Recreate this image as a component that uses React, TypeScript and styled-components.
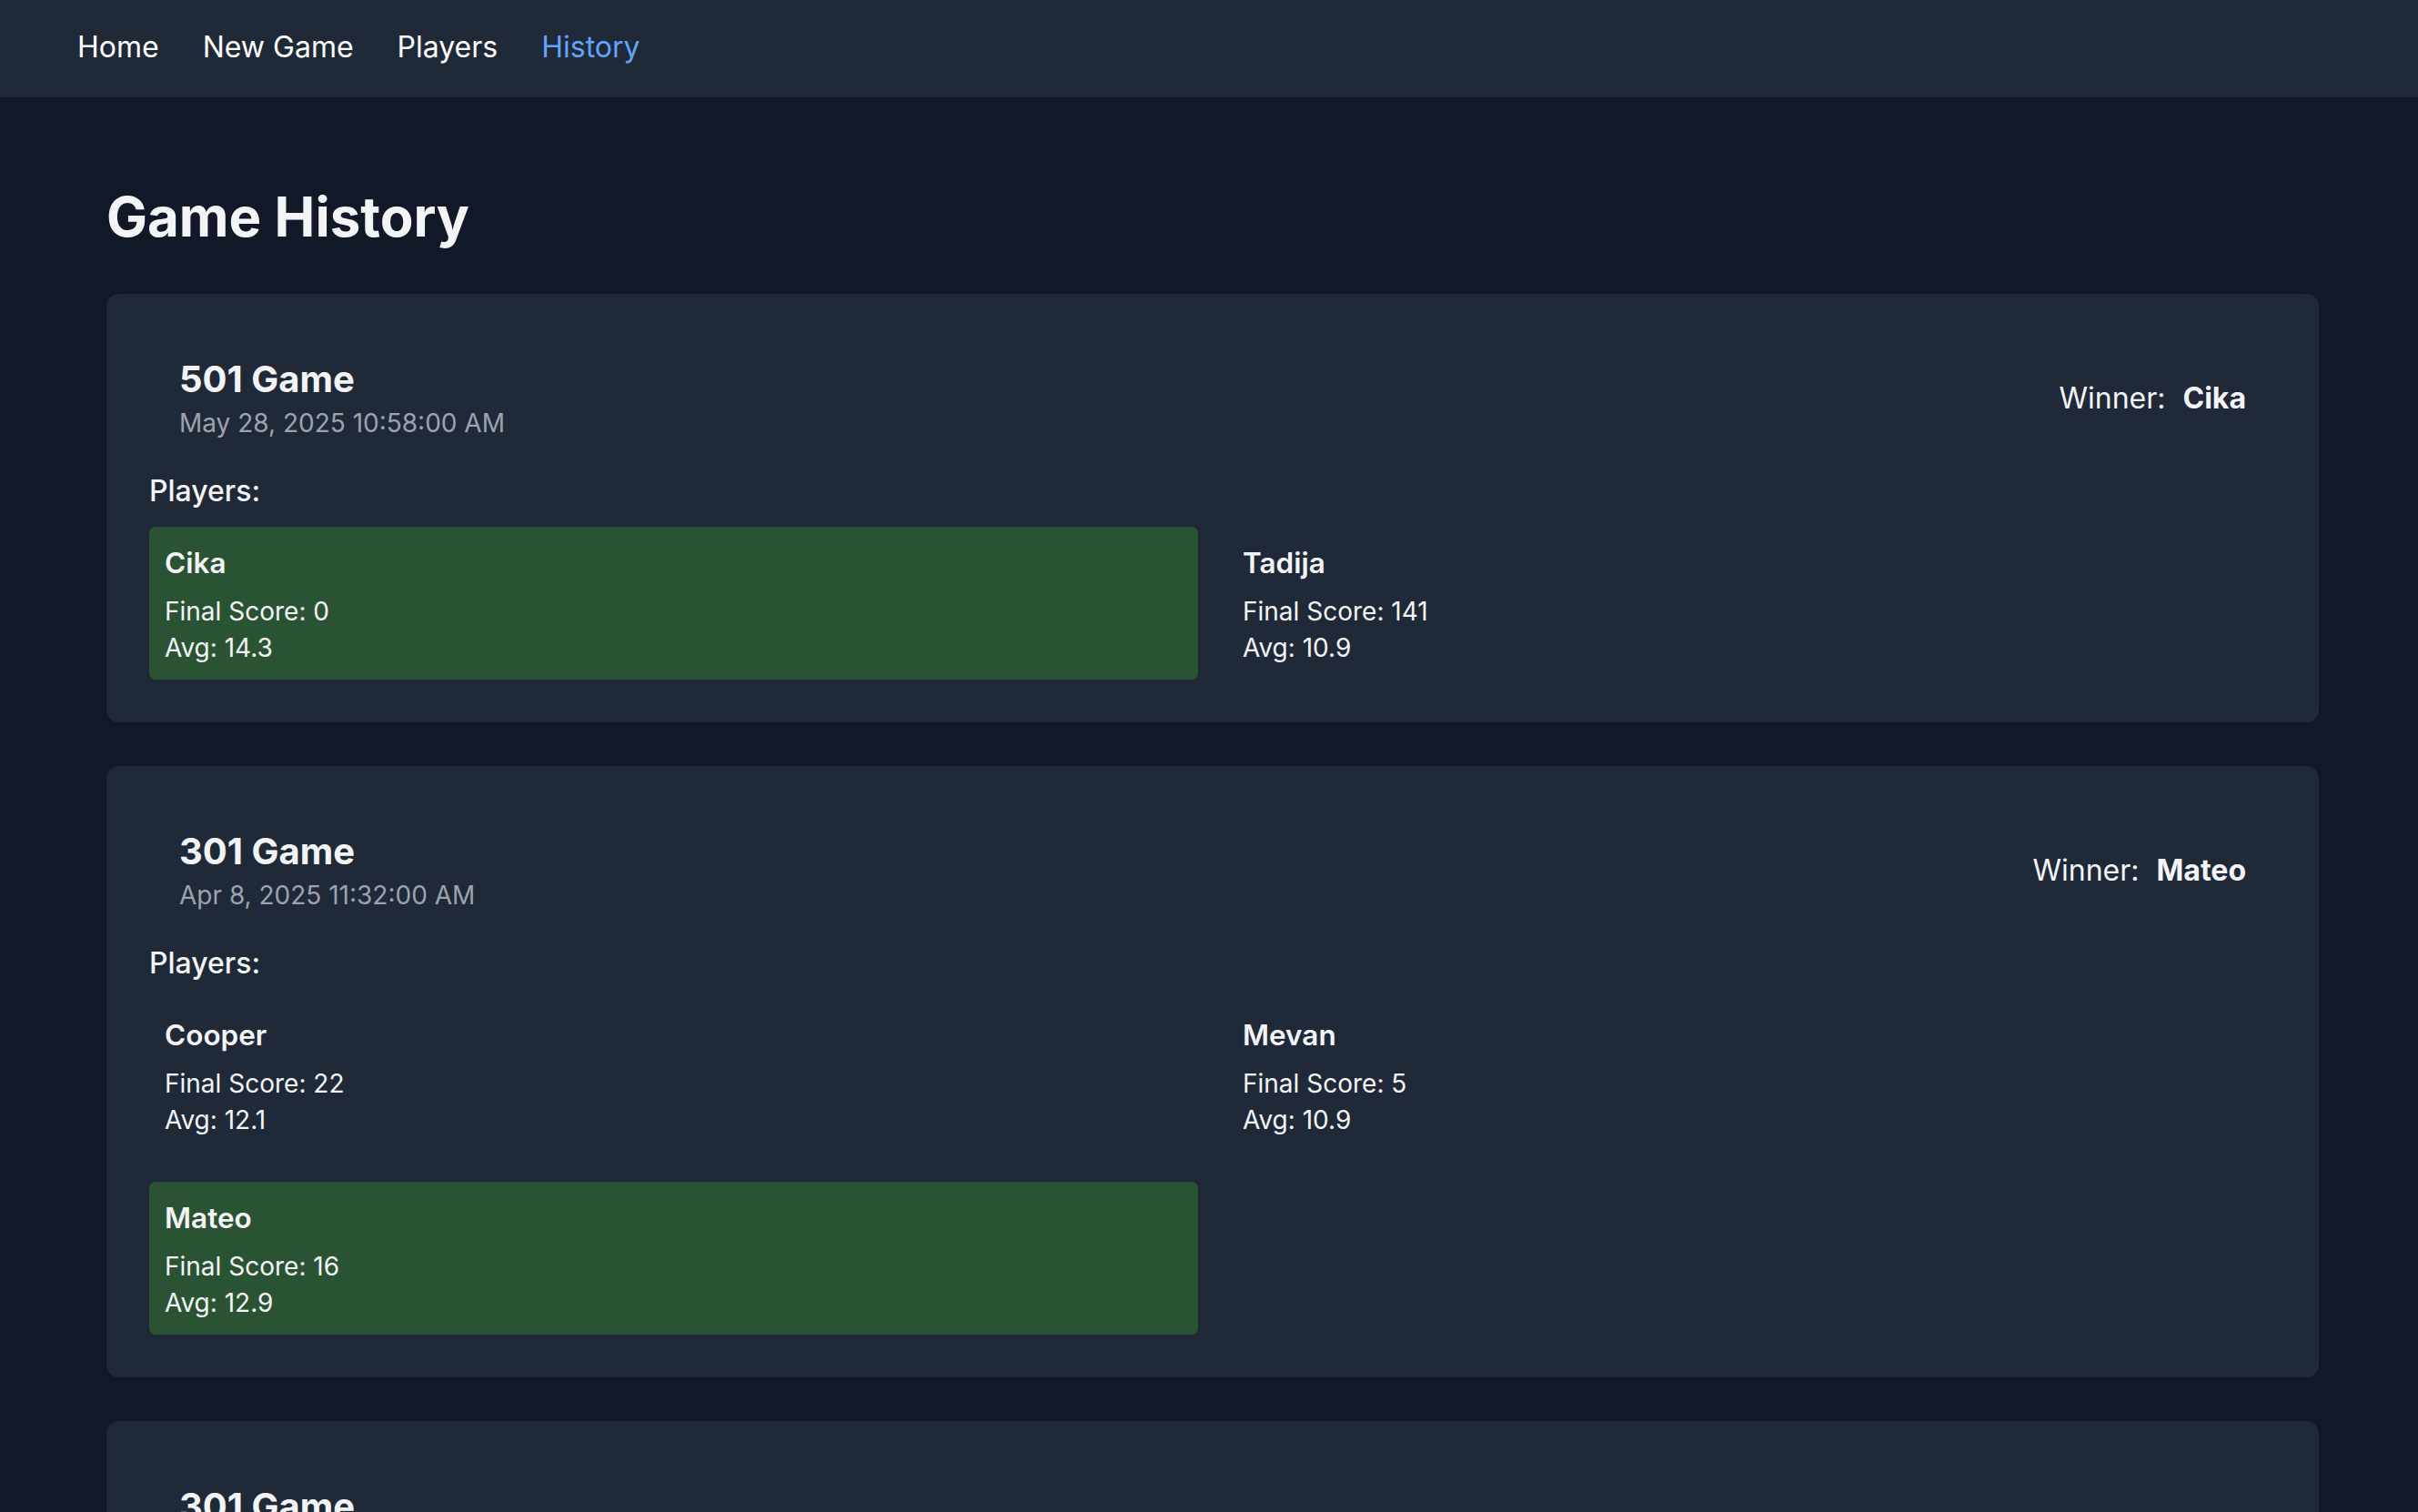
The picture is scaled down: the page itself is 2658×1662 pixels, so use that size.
import React from "react";
import styled, { createGlobalStyle } from "styled-components";

const GlobalStyle = createGlobalStyle`
  html, body {
    margin: 0;
    padding: 0;
    background: #111827;
  }
  body {
    font-family: Inter, "Noto Sans", "Liberation Sans", sans-serif;
    color: #f3f4f6;
  }
  * { box-sizing: border-box; }
`;

const NavBar = styled.nav`
  height: 107px;
  background: #1f2937;
  display: flex;
  align-items: center;
  gap: 48px;
  padding: 0 0 4px 85px;
`;

const NavLink = styled.a<{ $active?: boolean }>`
  font-size: 32px;
  line-height: 40px;
  font-weight: 400;
  color: ${(p) => (p.$active ? "#60a5fa" : "#ffffff")};
  text-decoration: none;
  cursor: pointer;
`;

const Main = styled.main`
  padding: 95px 109px 48px 117px;
`;

const PageTitle = styled.h1`
  margin: 0 0 48px;
  font-size: 60px;
  line-height: 73px;
  font-weight: 700;
  color: #f3f4f6;
`;

const CardList = styled.div`
  display: flex;
  flex-direction: column;
  gap: 48px;
`;

const Card = styled.section`
  background: #1f2937;
  border-radius: 14px;
  padding: 47px;
`;

const CardHeader = styled.div`
  display: flex;
  justify-content: space-between;
  align-items: center;
  padding: 22px 33px 18px;
`;

const GameTitle = styled.h2`
  margin: 0;
  font-size: 40px;
  line-height: 50px;
  font-weight: 700;
  color: #f3f4f6;
`;

const GameDate = styled.div`
  margin-top: 6px;
  font-size: 28px;
  line-height: 35px;
  color: #9ca3af;
`;

const Winner = styled.div`
  display: flex;
  align-items: baseline;
  gap: 19px;
  font-size: 32px;
  line-height: 40px;
  color: #f3f4f6;
`;

const WinnerName = styled.strong`
  font-weight: 700;
`;

const PlayersLabel = styled.div`
  margin-top: 20px;
  font-size: 32px;
  line-height: 38px;
  font-weight: 500;
  color: #f3f4f6;
`;

const PlayerGrid = styled.div`
  margin-top: 20px;
  display: grid;
  grid-template-columns: 1fr 1fr;
  gap: 33px 32px;
`;

const PlayerBox = styled.div<{ $winner?: boolean }>`
  background: ${(p) => (p.$winner ? "#2a5334" : "transparent")};
  border-radius: 7px;
  padding: 19px 17px 15px;
`;

const PlayerName = styled.div`
  font-size: 31.5px;
  line-height: 42px;
  font-weight: 600;
  margin-bottom: 12px;
  color: #f3f4f6;
`;

const StatLine = styled.div`
  font-size: 28px;
  line-height: 40px;
  color: #f3f4f6;
`;

type Player = { name: string; score: number; avg: string };
type Game = { title: string; date: string; winner: string; players: Player[] };

const games: Game[] = [
  {
    title: "501 Game",
    date: "May 28, 2025 10:58:00 AM",
    winner: "Cika",
    players: [
      { name: "Cika", score: 0, avg: "14.3" },
      { name: "Tadija", score: 141, avg: "10.9" },
    ],
  },
  {
    title: "301 Game",
    date: "Apr 8, 2025 11:32:00 AM",
    winner: "Mateo",
    players: [
      { name: "Cooper", score: 22, avg: "12.1" },
      { name: "Mevan", score: 5, avg: "10.9" },
      { name: "Mateo", score: 16, avg: "12.9" },
    ],
  },
  {
    title: "301 Game",
    date: "Apr 8, 2025 10:47:00 AM",
    winner: "Cooper",
    players: [
      { name: "Cooper", score: 0, avg: "13.4" },
      { name: "Mevan", score: 38, avg: "11.2" },
    ],
  },
];

const links = ["Home", "New Game", "Players", "History"];

export default function App() {
  return (
    <>
      <GlobalStyle />
      <NavBar>
        {links.map((l) => (
          <NavLink key={l} $active={l === "History"}>
            {l}
          </NavLink>
        ))}
      </NavBar>
      <Main>
        <PageTitle>Game History</PageTitle>
        <CardList>
          {games.map((g, i) => (
            <Card key={i}>
              <CardHeader>
                <div>
                  <GameTitle>{g.title}</GameTitle>
                  <GameDate>{g.date}</GameDate>
                </div>
                <Winner>
                  <span>Winner:</span>
                  <WinnerName>{g.winner}</WinnerName>
                </Winner>
              </CardHeader>
              <PlayersLabel>Players:</PlayersLabel>
              <PlayerGrid>
                {g.players.map((p) => (
                  <PlayerBox key={p.name} $winner={p.name === g.winner}>
                    <PlayerName>{p.name}</PlayerName>
                    <StatLine>Final Score: {p.score}</StatLine>
                    <StatLine>Avg: {p.avg}</StatLine>
                  </PlayerBox>
                ))}
              </PlayerGrid>
            </Card>
          ))}
        </CardList>
      </Main>
    </>
  );
}
